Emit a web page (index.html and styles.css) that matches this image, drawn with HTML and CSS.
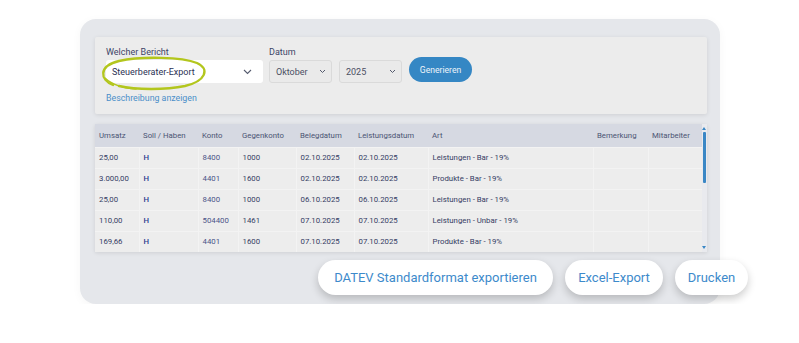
FILE: index.html
```html
<!DOCTYPE html>
<html lang="de">
<head>
    <meta charset="UTF-8">
    <meta name="viewport" content="width=device-width, initial-scale=1.0">
    <title>Steuerberater-Export</title>
    <link rel="stylesheet" href="styles.css">
</head>
<body>
    <div class="card">
        <div class="filter">
            <div class="field report-field">
                <label>Welcher Bericht</label>
                <div class="select report">
                    <span>Steuerberater-Export</span>
                    <svg class="chevron" width="9" height="6" viewBox="0 0 9 6"><path d="M1 1l3.5 3.5L8 1" fill="none" stroke="#555b6e" stroke-width="1.1"/></svg>
                </div>
                <a class="desc" href="#">Beschreibung anzeigen</a>
                <!-- hand drawn highlight -->
                <svg class="mark" width="114" height="36" viewBox="0 0 114 36">
                    <path d="M15 29 C2 24, 0 10, 21 5 C44 0, 84 1, 99 7 C112 13, 108 25, 87 30 C68 34, 38 34, 21 30" fill="none" stroke="#b3c61d" stroke-width="2.4" stroke-linecap="round"/>
                    <path d="M7 22 C13 28, 25 32, 38 33" fill="none" stroke="#b3c61d" stroke-width="1.6" stroke-linecap="round"/>
                </svg>
            </div>
            <div class="field">
                <label>Datum</label>
                <div class="date-row">
                    <div class="select small">
                        <span>Oktober</span>
                        <svg class="chevron" width="7" height="5" viewBox="0 0 7 5"><path d="M1 1l2.5 2.5L6 1" fill="none" stroke="#555b6e" stroke-width="1"/></svg>
                    </div>
                    <div class="select small">
                        <span>2025</span>
                        <svg class="chevron" width="7" height="5" viewBox="0 0 7 5"><path d="M1 1l2.5 2.5L6 1" fill="none" stroke="#555b6e" stroke-width="1"/></svg>
                    </div>
                    <button class="gen" type="button">Generieren</button>
                </div>
            </div>
        </div>

        <div class="table-wrap">
            <table>
                <thead>
                    <tr>
                        <th class="c1">Umsatz</th>
                        <th class="c2">Soll / Haben</th>
                        <th class="c3">Konto</th>
                        <th class="c4">Gegenkonto</th>
                        <th class="c5">Belegdatum</th>
                        <th class="c6">Leistungsdatum</th>
                        <th class="c7">Art</th>
                        <th class="c8">Bemerkung</th>
                        <th class="c9">Mitarbeiter</th>
                    </tr>
                </thead>
                <tbody>
                    <tr>
                        <td>25,00</td><td class="sh">H</td><td class="konto">8400</td><td>1000</td>
                        <td>02.10.2025</td><td>02.10.2025</td><td>Leistungen - Bar - 19%</td><td></td><td></td>
                    </tr>
                    <tr>
                        <td>3.000,00</td><td class="sh">H</td><td class="konto">4401</td><td>1600</td>
                        <td>02.10.2025</td><td>02.10.2025</td><td>Produkte - Bar - 19%</td><td></td><td></td>
                    </tr>
                    <tr>
                        <td>25,00</td><td class="sh">H</td><td class="konto">8400</td><td>1000</td>
                        <td>06.10.2025</td><td>06.10.2025</td><td>Leistungen - Bar - 19%</td><td></td><td></td>
                    </tr>
                    <tr>
                        <td>110,00</td><td class="sh">H</td><td class="konto">504400</td><td>1461</td>
                        <td>07.10.2025</td><td>07.10.2025</td><td>Leistungen - Unbar - 19%</td><td></td><td></td>
                    </tr>
                    <tr>
                        <td>169,66</td><td class="sh">H</td><td class="konto">4401</td><td>1600</td>
                        <td>07.10.2025</td><td>07.10.2025</td><td>Produkte - Bar - 19%</td><td></td><td></td>
                    </tr>
                </tbody>
            </table>
            <div class="scrollbar">
                <span class="arrow up"></span>
                <span class="thumb"></span>
                <span class="arrow down"></span>
            </div>
        </div>

        <div class="actions">
            <button type="button" class="datev">DATEV Standardformat exportieren</button>
            <button type="button" class="excel">Excel-Export</button>
            <button type="button" class="print">Drucken</button>
        </div>
    </div>
</body>
</html>
```

FILE: styles.css
```css
body {
    margin: 0;
    background: #fff;
    font-family: Roboto, "Liberation Sans", sans-serif;
    color: #3a4268;
}

.card {
    box-sizing: border-box;
    width: 640px;
    height: 285px;
    margin: 19px 0 0 80px;
    padding: 18px 13px 0 15px;
    background: #e5e7eb;
    border-radius: 16px;
    box-shadow: 0 2px 10px rgba(0, 0, 0, 0.04);
}

/* filter panel */
.filter {
    display: flex;
    gap: 6px;
    padding: 9px 11px 10px;
    background: #ececec;
    border-radius: 2px;
    box-shadow: 0 1px 4px rgba(0, 0, 0, 0.1);
}

.field {
    display: flex;
    flex-direction: column;
}

.report-field {
    position: relative;
}

label {
    font-size: 9px;
    line-height: 12px;
    color: #3d4466;
    margin-bottom: 2px;
}

.select {
    box-sizing: border-box;
    display: flex;
    align-items: center;
    justify-content: space-between;
    height: 23px;
    background: #fff;
    border-radius: 3px;
    font-size: 9px;
    color: #2b3153;
}

.select.report {
    width: 157px;
    padding: 0 11px 0 6px;
}

.select.small {
    width: 63px;
    padding: 0 5px 0 6px;
    background: #eaeaea;
    border: 1px solid #dadada;
    color: #4a4f63;
}

.desc {
    margin-top: 9px;
    font-size: 8.8px;
    line-height: 12px;
    color: #4b8fc9;
    text-decoration: none;
}

.mark {
    position: absolute;
    left: -8px;
    top: 10px;
}

.date-row {
    display: flex;
    align-items: flex-start;
    gap: 7px;
}

.gen {
    height: 25px;
    width: 63px;
    margin-top: -3px;
    padding: 0;
    border: none;
    border-radius: 13px;
    background: #3587c4;
    color: #eef4fa;
    font-family: inherit;
    font-size: 8.6px;
}

/* table */
.table-wrap {
    display: flex;
    margin-top: 10px;
    background: #ededed;
    box-shadow: 0 1px 4px rgba(0, 0, 0, 0.1);
}

table {
    flex: none;
    width: 607px;
    border-collapse: collapse;
    table-layout: fixed;
    font-size: 7.8px;
}

th,
td {
    box-sizing: border-box;
    padding: 0 4px;
}

th {
    height: 23px;
    background: #d6d9e2;
    text-align: left;
    font-weight: 400;
    color: #4b5473;
}

td {
    height: 21px;
    border-top: 1px solid #f3f3f3;
    border-left: 1px solid #f3f3f3;
    color: #353c64;
    white-space: nowrap;
}

td:first-child {
    border-left: none;
}

.sh {
    color: #2b3a8e;
    font-weight: 500;
}

.konto {
    color: #4b5388;
}

.c1 { width: 44px; }
.c2 { width: 59px; }
.c3 { width: 40px; }
.c4 { width: 58px; }
.c5 { width: 58px; }
.c6 { width: 74px; }
.c7 { width: 165px; }
.c8 { width: 55px; }
.c9 { width: 54px; }

.scrollbar {
    position: relative;
    flex: 1;
    background: #e9eaee;
}

.thumb {
    position: absolute;
    left: 1px;
    top: 8px;
    width: 3px;
    height: 51px;
    background: #3a87c5;
    border-radius: 1px;
}

.arrow {
    position: absolute;
    left: 0;
    width: 0;
    height: 0;
    border-left: 2.5px solid transparent;
    border-right: 2.5px solid transparent;
}

.arrow.up {
    top: 3px;
    border-bottom: 3px solid #3a87c5;
}

.arrow.down {
    bottom: 3px;
    border-top: 3px solid #3a87c5;
}

/* export buttons */
.actions {
    display: flex;
    justify-content: flex-end;
    gap: 12px;
    margin-top: 8px;
    margin-right: -41px;
}

.actions button {
    height: 35px;
    padding: 0 15px;
    border: none;
    border-radius: 18px;
    background: #fff;
    color: #3d8acb;
    font-family: inherit;
    font-size: 13px;
    box-shadow: 0 4px 9px rgba(0, 0, 0, 0.2);
}

.actions .datev {
    width: 235px;
}

.actions .excel {
    width: 98px;
    padding: 0;
}

.actions .print {
    width: 73px;
    padding: 0;
}
```
